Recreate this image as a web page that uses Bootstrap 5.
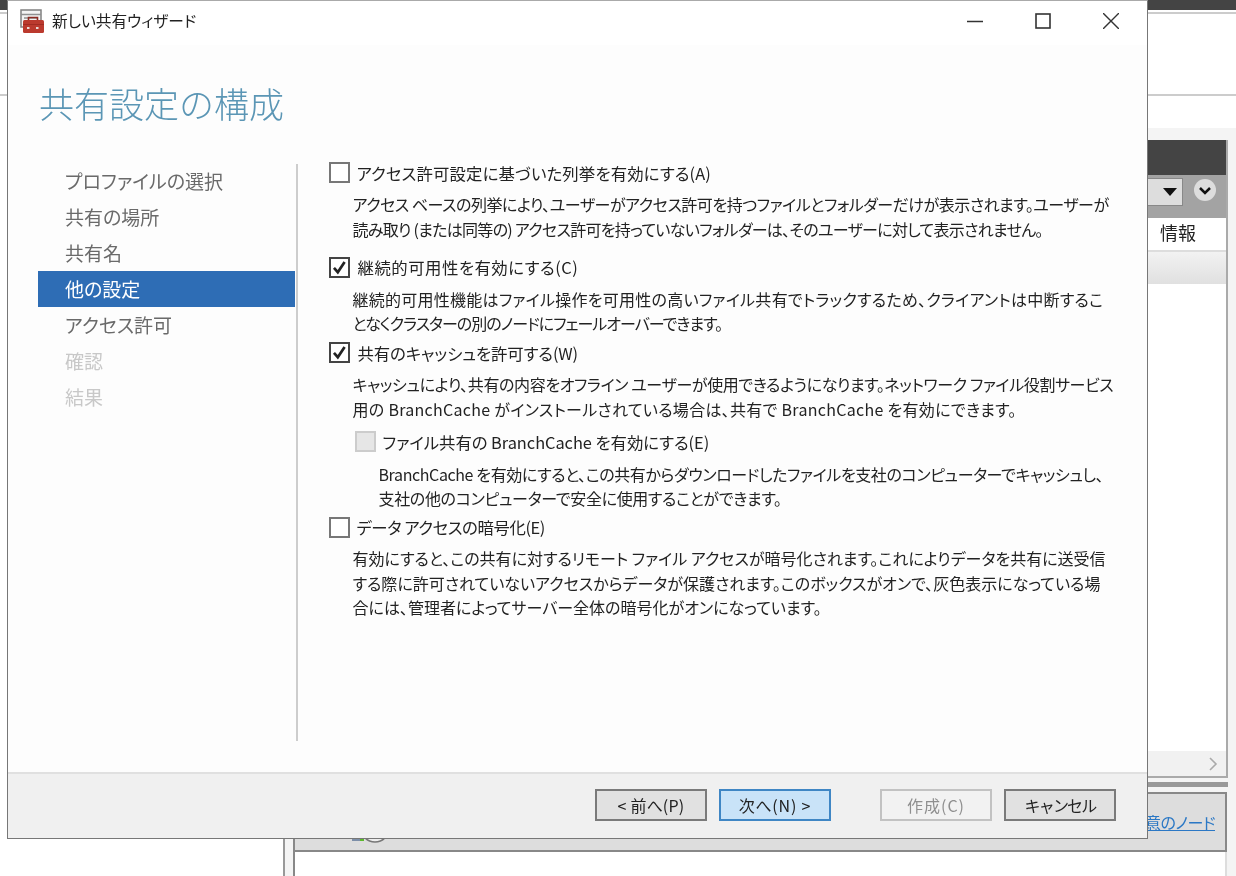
<!DOCTYPE html>
<html lang="ja">
<head>
<meta charset="utf-8">
<link href="https://cdn.jsdelivr.net/npm/bootstrap@5.3.0/dist/css/bootstrap.min.css" rel="stylesheet">
<style>
html,body{height:876px;overflow:hidden;background:#fff}
body{position:relative;font-family:"Noto Sans CJK JP","Liberation Sans",sans-serif;font-feature-settings:"palt";color:#222;filter:blur(.35px)}
/* backdrop window */
.bg-top{height:10px;background:#444}
.bg-menu{height:82px;border-top:2px solid #ccc;margin-top:2px}
.bg-strip{height:34px;border-top:2px solid #ccc}
.bg-main{height:748px}
.bg-left{width:283px;background:#fff;flex:none}
.bg-right{flex:1;background:#f4f4f4;border-left:2px solid #999;padding:0 8px}
.bg-panel{margin-top:12px;background:#fff;border:2px solid #aaa;border-top:0}
.bg-head{height:35px;background:#444}
.bg-tool{height:43px;background:#a3a3a3;padding:3px 9px 0 0}
.bg-combo{width:40px;height:28px;background:#ddd;border:1px solid #888;margin-right:10px}
.bg-cols{height:34px;border-bottom:2px solid #ddd;font-size:18px;color:#222;padding:0 30px 4px 0}
.bg-band{height:32px;background:linear-gradient(#f2f2f2,#e0e0e0)}
.bg-grow{height:467px}
.bg-scroll{height:25px;background:#f1f1f1}
.bg-sep{height:5px;margin-top:4px;background:#999}
.bg-panel2{height:60px;margin:5px 1px 0 0;background:#ddd;border:2px solid #888;font-size:16px;padding-right:10px}
.bg-panel2 a{color:#2b78c5;letter-spacing:-.5px}
.bg-node{margin:auto auto 2px 55px}
.bg-white{background:#fff;height:30px;border-left:2px solid #888;border-right:2px solid #ddd;margin-right:1px}
/* dialog */
.wizard{position:absolute;left:7px;top:0;width:1141px;height:839px;background:#fdfdfd;border:1.5px solid #777;border-top-color:#aaa;display:flex;flex-direction:column}
.w-title{height:44px;background:#fff;padding:0 0 5px 12px;font-size:15.7px;color:#222}
.w-title svg.ctl{width:16px;height:16px}
.w-ctl{width:68px}
.w-ctls{margin-right:2px}
.w-icon{width:24px;height:24px;flex:none}
.w-heading{font-size:35px;font-weight:300;color:#5b96b5;margin:34px 0 0 31px;line-height:48px;font-feature-settings:normal}
.w-body{flex:1;min-height:0;margin-top:36px}
.w-nav{width:287.5px;flex:none;padding-left:30px}
.w-nav li{height:36px;line-height:36px;padding-left:27px;width:257px;font-size:19px;color:#6a6a6a}
.w-nav li.active{background:#2e6db5;color:#fff}
.w-nav li.off{color:#c8c8c8}
.w-div{width:2px;flex:none;height:577px;background:#cdcdcd;margin-top:1px}
.w-main{padding-left:31px;margin-top:-2.5px;font-size:16.4px;color:#222;min-width:0}
.chk{height:24px;gap:7px;line-height:24px}
.chk .form-check-input{width:21px;height:21px;margin:0;flex:none;border:2px solid #777;border-radius:0;background-color:#fff}
.chk .form-check-input:checked{background-color:#fff;border-color:#444;background-image:url("data:image/svg+xml,%3Csvg xmlns='http://www.w3.org/2000/svg' viewBox='0 0 20 20'%3E%3Cpath fill='none' stroke='%23222' stroke-width='3.2' d='M3.500 10.500 8 15.500 16 3.500'/%3E%3C/svg%3E");background-size:100% 100%}
.chk .form-check-input:disabled{opacity:1;background-color:#e6e6e6;border-color:#ccc}
.chk .form-check-label{opacity:1!important;color:#222}
.desc{margin:7.5px 0 0 24px;line-height:24.8px;white-space:nowrap;font-size:16px}
.desc.subdesc{margin:8.6px 0 0 50px;line-height:24px}
.desc.last{margin-top:6.5px}
.sub{margin-left:26px;margin-top:8px}
.m2{margin-top:13.5px}
.m3{margin-top:4.4px}
.m4{margin-top:5px}
.lab-a{letter-spacing:.13px}
.lab-b{letter-spacing:.5px;margin-left:1px}
.lab-c{margin-left:1px;letter-spacing:-.1px}
.lab-d{letter-spacing:-.05px}
.lab-e{letter-spacing:-.42px}
.s1{letter-spacing:-.48px}
.s2{letter-spacing:-.71px}
.s3{letter-spacing:.26px}
.s4{letter-spacing:-1px}
.s5{letter-spacing:-.38px}
.s6{letter-spacing:.29px}
.s7{letter-spacing:-.39px}
.s8{letter-spacing:-.33px}
.w-foot{height:66px;background:#f0f0f0;border-top:2px solid #e0e0e0;padding:15px 31px 0 0;gap:12px}
.w-foot .btn{width:112px;height:32px;padding:0;border-radius:0;font-size:16px;line-height:28px;background:#e1e1e1;border:2px solid #7a7a7a;color:#222}
.w-foot .btn.primaryish{background:#c9e3f8;border-color:#3f86c4;letter-spacing:.8px}
.w-foot .btn.back{letter-spacing:.2px}
.w-foot .btn.cancel{letter-spacing:-1.8px}
.w-foot .btn:disabled{opacity:1;background:#f2f2f2;border-color:#c2c2c2;color:#8f8f8f;margin-left:37px;letter-spacing:1px}
</style>
</head>
<body>
<div class="bg-top"></div>
<div class="bg-menu"></div>
<div class="bg-strip"></div>
<div class="bg-main d-flex">
  <div class="bg-left"></div>
  <div class="bg-right">
    <div class="bg-panel">
      <div class="bg-head"></div>
      <div class="bg-tool d-flex align-items-start justify-content-end">
        <div class="bg-combo d-flex align-items-center justify-content-end pe-1">
          <svg width="16" height="10" viewBox="0 0 16 10"><path d="M1 1h14L8 9z" fill="#111"/></svg>
        </div>
        <svg width="24" height="24" viewBox="0 0 24 24"><circle cx="12" cy="12" r="11" fill="#ddd"/><path d="M7 10l5 5 5-5" fill="none" stroke="#111" stroke-width="2.5"/></svg>
      </div>
      <div class="bg-cols d-flex justify-content-end align-items-center">情報</div>
      <div class="bg-band"></div>
      <div class="bg-grow"></div>
      <div class="bg-scroll d-flex justify-content-end align-items-center pe-2">
        <svg width="10" height="14" viewBox="0 0 10 14"><path d="M2 1l6 6-6 6" fill="none" stroke="#aaa" stroke-width="1.6"/></svg>
      </div>
    </div>
    <div class="bg-sep"></div>
    <div class="bg-panel2 d-flex align-items-center">
      <svg class="bg-node" width="40" height="36" viewBox="0 0 40 36">
        <circle cx="25" cy="16" r="14" fill="#eee" stroke="#777" stroke-width="1.5"/>
        <rect x="2" y="22" width="11" height="7" fill="#7d8fa8"/>
        <rect x="10" y="25" width="4" height="4" fill="#5cb82e"/>
        <circle cx="25" cy="24" r="3" fill="#3f9a2a"/>
      </svg>
      <a href="#">任意のノード</a>
    </div>
    <div class="bg-white"></div>
  </div>
</div>

<div class="wizard">
  <div class="w-title d-flex align-items-center">
    <svg class="w-icon me-2" viewBox="0 0 24 24">
      <rect x="1" y="1" width="20" height="17" fill="#f3f3f3" stroke="#808080" stroke-width="1.5"/>
      <path d="M1 5.500h20M4 9h14M4 12.500h4" stroke="#909090" stroke-width="1.5"/>
      <path d="M8.500 11.500v-3h9v3" fill="none" stroke="#8c2a22" stroke-width="1.6"/>
      <rect x="3" y="11" width="21" height="13" rx="1.500" fill="#bb3a2e"/>
      <path d="M3 15.500h21" stroke="#a22c22" stroke-width="1"/>
      <path d="M7 19h2.500M16 19h2.500" stroke="#ecd9d6" stroke-width="2"/>
    </svg>
    <span class="flex-grow-1">新しい共有ウィザード</span>
    <div class="w-ctls d-flex align-items-center">
      <div class="w-ctl d-flex justify-content-center"><svg class="ctl" viewBox="0 0 16 16"><path d="M0 8.500h16" stroke="#333" stroke-width="1.5"/></svg></div>
      <div class="w-ctl d-flex justify-content-center"><svg class="ctl" viewBox="0 0 16 16"><rect x="1" y="1" width="14" height="14" fill="none" stroke="#333" stroke-width="1.6"/></svg></div>
      <div class="w-ctl d-flex justify-content-center"><svg class="ctl" viewBox="0 0 16 16"><path d="M0 0l16 16M16 0L0 16" stroke="#333" stroke-width="1.4"/></svg></div>
    </div>
  </div>
  <h1 class="w-heading">共有設定の構成</h1>
  <div class="w-body d-flex">
    <div class="w-nav">
      <ul class="list-unstyled m-0">
        <li>プロファイルの選択</li>
        <li>共有の場所</li>
        <li>共有名</li>
        <li class="active">他の設定</li>
        <li>アクセス許可</li>
        <li class="off">確認</li>
        <li class="off">結果</li>
      </ul>
    </div>
    <div class="w-div"></div>
    <div class="w-main flex-grow-1">
      <div class="form-check chk d-flex align-items-center p-0">
        <input class="form-check-input" type="checkbox" id="c1">
        <label class="form-check-label lab-a" for="c1">アクセス許可設定に基づいた列挙を有効にする(A)</label>
      </div>
      <p class="desc"><span class="s1">アクセス ベースの列挙により、ユーザーがアクセス許可を持つファイルとフォルダーだけが表示されます。ユーザーが</span><br><span class="s2">読み取り (または同等の) アクセス許可を持っていないフォルダーは、そのユーザーに対して表示されません。</span></p>
      <div class="form-check chk d-flex align-items-center p-0 m2">
        <input class="form-check-input" type="checkbox" id="c2" checked>
        <label class="form-check-label lab-b" for="c2">継続的可用性を有効にする(C)</label>
      </div>
      <p class="desc"><span class="s3">継続的可用性機能はファイル操作を可用性の高いファイル共有でトラックするため、クライアントは中断するこ</span><br><span class="s4">となくクラスターの別のノードにフェールオーバーできます。</span></p>
      <div class="form-check chk d-flex align-items-center p-0 m3">
        <input class="form-check-input" type="checkbox" id="c3" checked>
        <label class="form-check-label lab-c" for="c3">共有のキャッシュを許可する(W)</label>
      </div>
      <p class="desc"><span class="s5">キャッシュにより、共有の内容をオフライン ユーザーが使用できるようになります。ネットワーク ファイル役割サービス</span><br><span class="s6">用の BranchCache がインストールされている場合は、共有で BranchCache を有効にできます。</span></p>
      <div class="form-check chk d-flex align-items-center p-0 sub">
        <input class="form-check-input" type="checkbox" id="c4" disabled>
        <label class="form-check-label lab-d" for="c4">ファイル共有の BranchCache を有効にする(E)</label>
      </div>
      <p class="desc subdesc"><span class="s7">BranchCache を有効にすると、この共有からダウンロードしたファイルを支社のコンピューターでキャッシュし、</span><br><span class="s8">支社の他のコンピューターで安全に使用することができます。</span></p>
      <div class="form-check chk d-flex align-items-center p-0 m4">
        <input class="form-check-input" type="checkbox" id="c5">
        <label class="form-check-label lab-e" for="c5">データ アクセスの暗号化(E)</label>
      </div>
      <p class="desc last">有効にすると、この共有に対するリモート ファイル アクセスが暗号化されます。これによりデータを共有に送受信<br>する際に許可されていないアクセスからデータが保護されます。このボックスがオンで、灰色表示になっている場<br>合には、管理者によってサーバー全体の暗号化がオンになっています。</p>
    </div>
  </div>
  <div class="w-foot d-flex justify-content-end align-items-start">
    <button class="btn back" type="button">&lt; 前へ(P)</button>
    <button class="btn primaryish" type="button">次へ(N) &gt;</button>
    <button class="btn" type="button" disabled>作成(C)</button>
    <button class="btn cancel" type="button">キャンセル</button>
  </div>
</div>
<script src="https://cdn.jsdelivr.net/npm/bootstrap@5.3.0/dist/js/bootstrap.bundle.min.js"></script>
</body>
</html>
